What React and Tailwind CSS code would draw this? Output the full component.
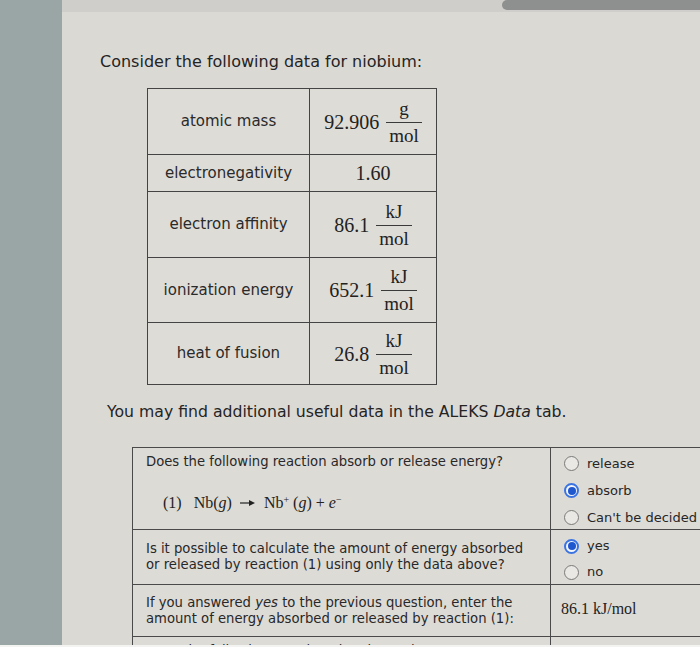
import React from 'react';

const sans = "font-['DejaVu_Sans',Verdana,sans-serif]";
const serif = "font-['Liberation_Serif','Times_New_Roman',serif]";

const Frac = ({ top, bottom }) => (
    <span className="inline-flex flex-col items-center leading-none ml-[7px]">
        <span className="px-[4px] pb-[4px] text-[19px]">{top}</span>
        <span className="w-full border-t border-[#3a3a3a]" />
        <span className="px-[3px] pt-[3px] text-[19px]">{bottom}</span>
    </span>
);

const Radio = ({ checked }) => (
    checked ? (
        <span className="w-[15px] h-[15px] rounded-full border-2 border-[#3b74e2] bg-[#f4f6fb] flex items-center justify-center shrink-0">
            <span className="w-[8px] h-[8px] rounded-full bg-[#1f57cf]" />
        </span>
    ) : (
        <span className="w-[15px] h-[15px] rounded-full border border-[#7a7a7a] bg-[#e9e8e4] shrink-0" />
    )
);

const Option = ({ label, checked, h }) => (
    <div className={`flex items-center gap-[8px] ${h}`}>
        <Radio checked={checked} />
        <span className="text-[13px] text-[#262626]">{label}</span>
    </div>
);

const dataRows = [
    { label: 'atomic mass', value: '92.906', frac: ['g', 'mol'], h: 'h-[65px]' },
    { label: 'electronegativity', value: '1.60', h: 'h-[37px]' },
    { label: 'electron affinity', value: '86.1', frac: ['kJ', 'mol'], h: 'h-[66px]' },
    { label: 'ionization energy', value: '652.1', frac: ['kJ', 'mol'], h: 'h-[65px]' },
    { label: 'heat of fusion', value: '26.8', frac: ['kJ', 'mol'], h: 'h-[62px]' },
];

export default function App() {
    return (
        <div className={`w-[700px] h-[647px] overflow-hidden flex flex-col ${sans}`}>
            <div className="flex h-[645px]">
                {/* left edge of the screen */}
                <div className="w-[62px] shrink-0 bg-[#9aa5a6]" />

                <div className="flex-1 flex flex-col bg-[#dbd9d4] overflow-hidden">
                    {/* top band + scroll bar */}
                    <div className="h-[12px] shrink-0 bg-[#d0ceca] flex justify-end">
                        <div className="w-[198px] h-[10px] bg-[#8e908f] rounded-l-full" />
                    </div>

                    <p className="mt-[38px] ml-[38px] text-[16px] leading-[24px] text-[#242424]">
                        Consider the following data for niobium:
                    </p>

                    {/* data table */}
                    <div className="mt-[14px] ml-[85px] w-[290px] border border-[#444] bg-[#dedcd7]">
                        {dataRows.map((r, i) => (
                            <div key={r.label} className={`flex ${r.h} ${i > 0 ? 'border-t border-[#444]' : ''}`}>
                                <div className="w-[162px] shrink-0 border-r border-[#444] flex items-center justify-center text-[15px] text-[#2a2a2a]">
                                    {r.label}
                                </div>
                                <div className={`flex-1 flex items-center justify-center text-[20px] text-[#222] ${serif}`}>
                                    <span>{r.value}</span>
                                    {r.frac && <Frac top={r.frac[0]} bottom={r.frac[1]} />}
                                </div>
                            </div>
                        ))}
                    </div>

                    <p className="mt-[16px] ml-[45px] text-[15.7px] leading-[22px] text-[#242424] whitespace-nowrap">
                        You may find additional useful data in the ALEKS <i>Data</i> tab.
                    </p>

                    {/* question table */}
                    <div className="mt-[24px] ml-[70px] w-[640px] shrink-0 border-t border-l border-[#4a4a4a] bg-[#dddbd6] text-[13.2px] text-[#282828]">
                        <div className="flex h-[82px] border-b border-[#4a4a4a]">
                            <div className="w-[418px] shrink-0 border-r border-[#4a4a4a] pl-[13px] pt-[5px]">
                                <div className="leading-[18px]">Does the following reaction absorb or release energy?</div>
                                <div className={`mt-[22px] ml-[17px] leading-[20px] text-[16px] text-[#222] whitespace-nowrap flex items-center ${serif}`}>
                                    <span>(1)</span>
                                    <span className="ml-[12px]">Nb(<i>g</i>)</span>
                                    <svg className="mx-[8px]" width="16" height="8" viewBox="0 0 16 8">
                                        <line x1="0" y1="4" x2="11" y2="4" stroke="#222" strokeWidth="1.2" />
                                        <path d="M9 1 L15 4 L9 7 Z" fill="#222" />
                                    </svg>
                                    <span>Nb<sup className="text-[10px]">+</sup>&nbsp;(<i>g</i>)&nbsp;+&nbsp;<i>e</i><sup className="text-[10px]">−</sup></span>
                                </div>
                            </div>
                            <div className="flex-1 pl-[13px] pt-[2px]">
                                <Option label="release" h="h-[27px]" />
                                <Option label="absorb" checked h="h-[27px]" />
                                <Option label="Can't be decided" h="h-[27px]" />
                            </div>
                        </div>

                        <div className="flex h-[55px] border-b border-[#4a4a4a]">
                            <div className="w-[418px] shrink-0 border-r border-[#4a4a4a] pl-[13px] pt-[11px] leading-[16px]">
                                <div>Is it possible to calculate the amount of energy absorbed</div>
                                <div>or released by reaction (1) using only the data above?</div>
                            </div>
                            <div className="flex-1 pl-[13px] pt-[3px]">
                                <Option label="yes" checked h="h-[26px]" />
                                <Option label="no" h="h-[26px]" />
                            </div>
                        </div>

                        <div className="flex h-[52px] border-b border-[#4a4a4a]">
                            <div className="w-[418px] shrink-0 border-r border-[#4a4a4a] pl-[13px] pt-[10px] leading-[16px]">
                                <div>If you answered <i>yes</i> to the previous question, enter the</div>
                                <div>amount of energy absorbed or released by reaction (1):</div>
                            </div>
                            <div className={`flex-1 pl-[10px] pt-[14px] leading-[20px] text-[16px] text-[#222] ${serif}`}>
                                86.1 kJ/mol
                            </div>
                        </div>

                        <div className="flex h-[40px]">
                            <div className="w-[418px] shrink-0 border-r border-[#4a4a4a] pl-[13px] pt-[5px] leading-[18px]">
                                Does the following reaction absorb or release energy?
                            </div>
                            <div className="flex-1 pl-[13px] pt-[2px]">
                                <Option label="release" checked h="h-[27px]" />
                            </div>
                        </div>
                    </div>
                </div>
            </div>
            <div className="h-[2px] bg-[#f3f3f1]" />
        </div>
    );
}
